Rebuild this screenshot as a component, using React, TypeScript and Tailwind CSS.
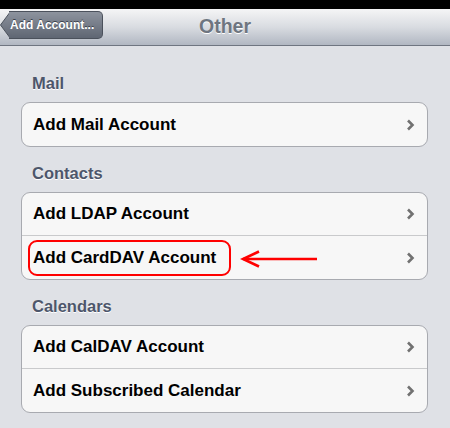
const font = { fontFamily: '"Liberation Sans", Arial, sans-serif' };

function Chevron() {
  return (
    <svg width="9" height="12" viewBox="0 0 9 12" className="shrink-0">
      <polyline
        points="2,1.5 6.5,6 2,10.5"
        fill="none"
        stroke="#717171"
        strokeWidth="2.6"
        strokeLinecap="butt"
        strokeLinejoin="miter"
      />
    </svg>
  );
}

function Row({ label, last, children }: { label: string; last?: boolean; children?: React.ReactNode }) {
  return (
    <div
      className={`relative flex h-[43px] items-center justify-between pl-[11px] pr-[12px] ${
        last ? "" : "border-b border-[#c9cacc]"
      }`}
    >
      <span className="text-[17px] font-bold text-black">{label}</span>
      <Chevron />
      {children}
    </div>
  );
}

function Group({ title, first, children }: { title: string; first?: boolean; children: React.ReactNode }) {
  return (
    <section>
      <h2
        className={`${first ? "mt-[27px]" : "mt-[16px]"} mb-[9px] pl-[11px] text-[16.5px] leading-[20px] font-bold text-[#4d566b] [text-shadow:0_1px_0_#ffffff]`}
      >
        {title}
      </h2>
      <div className="rounded-[9px] border border-[#a8aab0] bg-[#f7f7f7]">{children}</div>
    </section>
  );
}

export default function App() {
  return (
    <div className="h-[428px] w-[450px] overflow-hidden bg-[#dfe1e6]" style={font}>
      {/* status strip */}
      <div className="h-[9px] bg-black" />

      {/* nav bar */}
      <header className="relative flex h-[37px] items-center justify-center border-b border-[#6f7581] bg-gradient-to-b from-[#f5f5f6] via-[#d9dce1] to-[#b1b7c2]">
        <button className="absolute left-0 top-[2px] flex h-[28px] items-center">
          <svg width="10" height="28" viewBox="0 0 10 28" className="-mr-px">
            <defs>
              <linearGradient id="bk" x1="0" y1="0" x2="0" y2="1">
                <stop offset="0" stopColor="#8d939e" />
                <stop offset="1" stopColor="#5f6673" />
              </linearGradient>
            </defs>
            <path d="M10.5 0.5 L0.5 14 L10.5 27.5 Z" fill="url(#bk)" stroke="#4b515c" strokeWidth="1" />
          </svg>
          <span className="flex h-[28px] items-center rounded-r-[5px] border border-l-0 border-[#4b515c] bg-gradient-to-b from-[#8d939e] to-[#5f6673] pl-[1px] pr-[8px] text-[12px] font-bold text-white [text-shadow:0_-1px_0_#3c424c]">
            Add Account...
          </span>
        </button>
        <h1 className="text-[19.5px] font-bold text-[#6e7580] [text-shadow:0_1px_0_#ffffff]">Other</h1>
      </header>

      <main className="pl-[21px] pr-[22px]">
        <Group title="Mail" first>
          <Row label="Add Mail Account" last />
        </Group>

        <Group title="Contacts">
          <Row label="Add LDAP Account" />
          <Row label="Add CardDAV Account" last>
            <div className="absolute left-[6px] top-[4px] h-[36px] w-[203px] rounded-[9px] border-[2.5px] border-[#ff0000]" />
            <svg width="80" height="18" viewBox="0 0 80 18" className="absolute left-[218px] top-[14px]">
              <line x1="3" y1="9" x2="77" y2="9" stroke="#ff0000" strokeWidth="2.6" />
              <polyline points="19,1.5 3,9 19,16.5" fill="none" stroke="#ff0000" strokeWidth="2.6" />
            </svg>
          </Row>
        </Group>

        <Group title="Calendars">
          <Row label="Add CalDAV Account" />
          <Row label="Add Subscribed Calendar" last />
        </Group>
      </main>
    </div>
  );
}
